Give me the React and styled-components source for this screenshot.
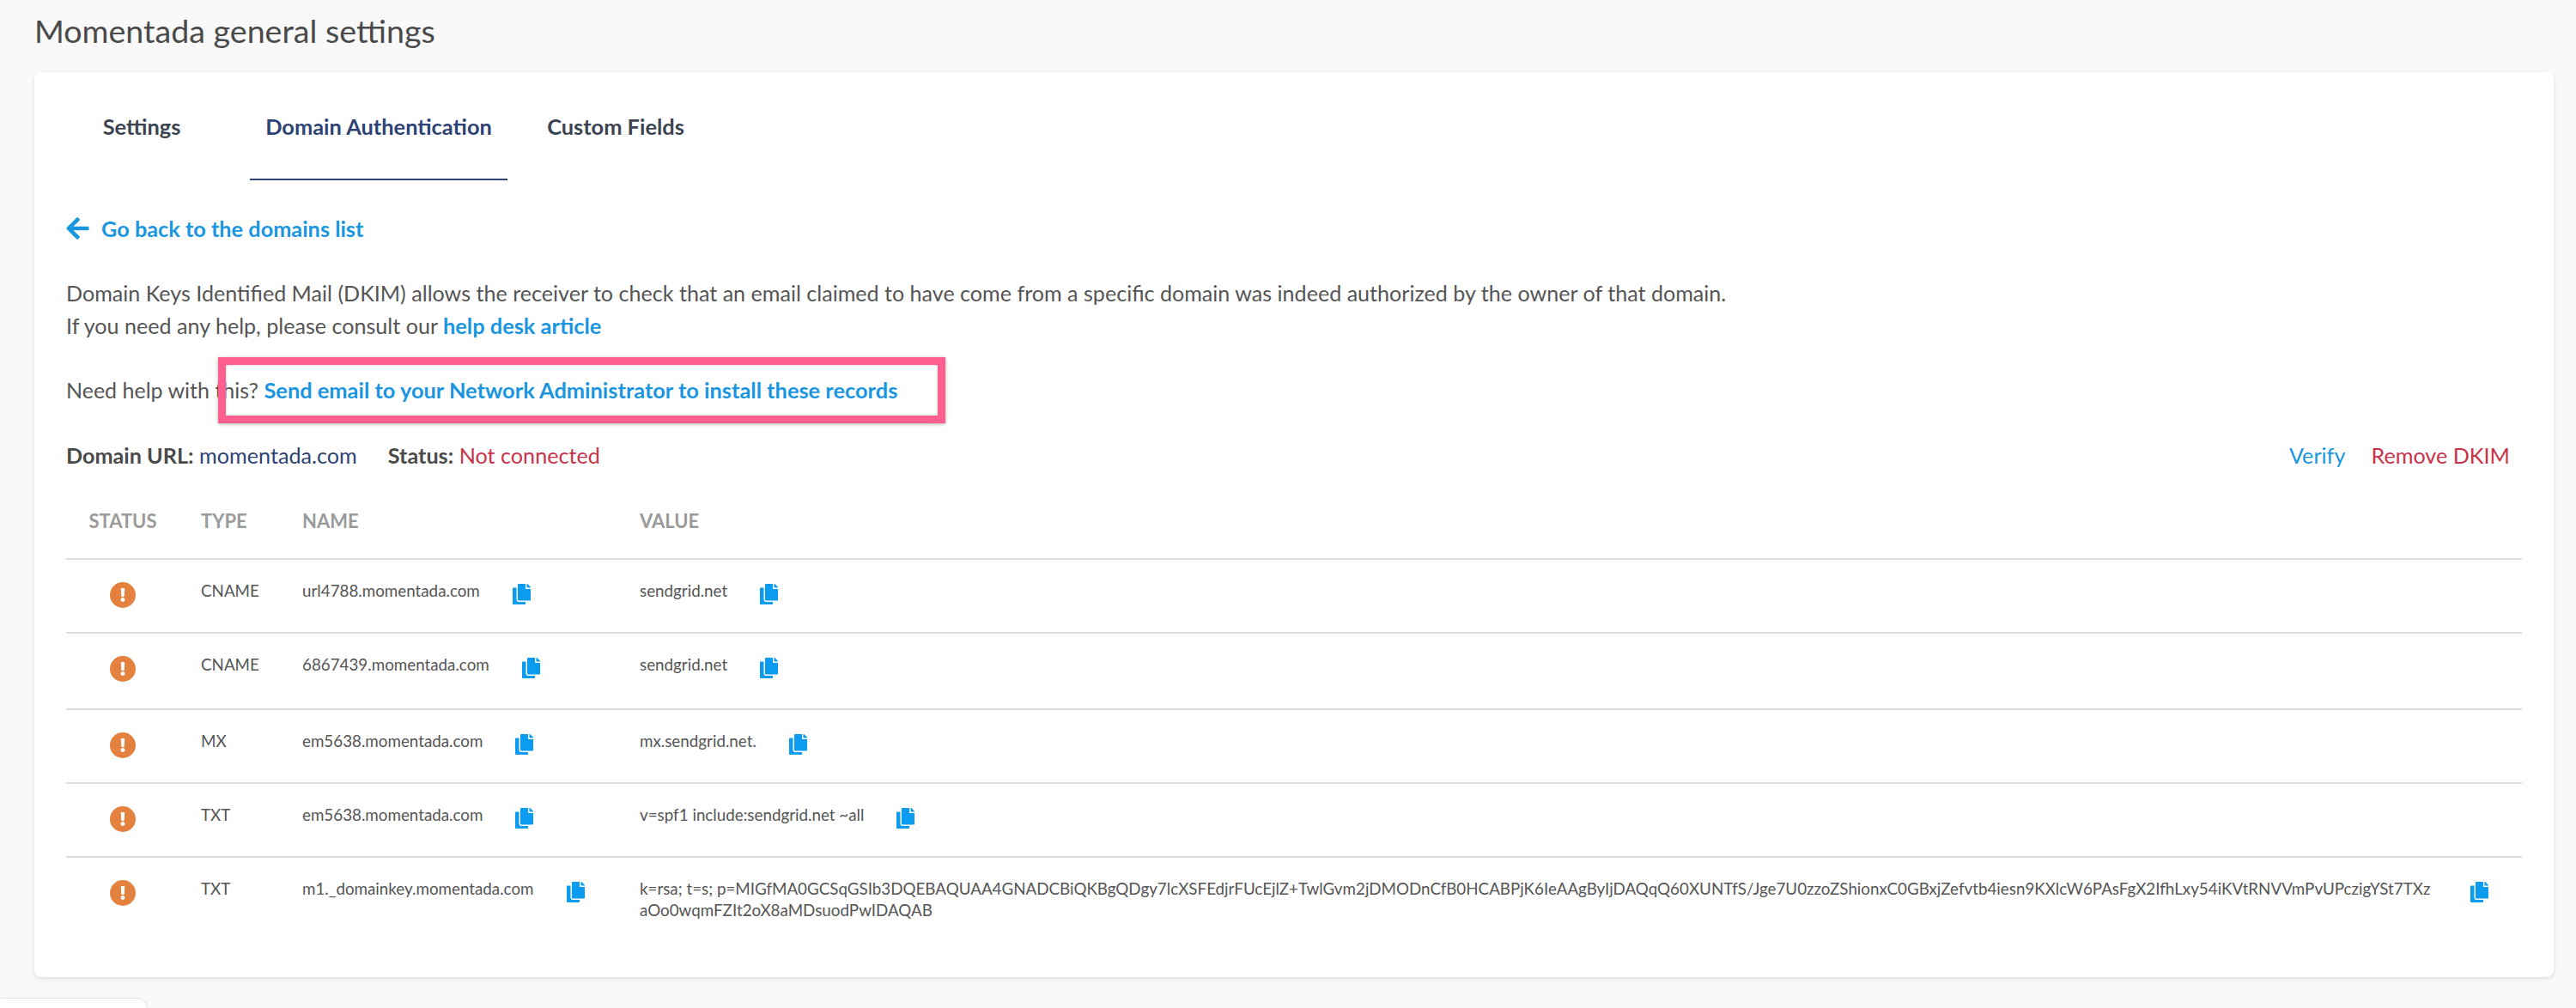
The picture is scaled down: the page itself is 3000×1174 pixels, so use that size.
import React from 'react';
import styled, { createGlobalStyle } from 'styled-components';
import { FaCopy, FaArrowLeft, FaExclamation } from 'react-icons/fa';

const GlobalStyle = createGlobalStyle`
  html, body {
    margin: 0;
    padding: 0;
    background: #f9f9f9;
  }
  body {
    font-family: Lato, "Open Sans", sans-serif;
    color: #555;
  }
`;

const records = [
  { type: 'CNAME', name: 'url4788.momentada.com', value: 'sendgrid.net', height: 86 },
  { type: 'CNAME', name: '6867439.momentada.com', value: 'sendgrid.net', height: 89 },
  { type: 'MX', name: 'em5638.momentada.com', value: 'mx.sendgrid.net.', height: 86 },
  { type: 'TXT', name: 'em5638.momentada.com', value: 'v=spf1 include:sendgrid.net ~all', height: 86 },
  {
    type: 'TXT',
    name: 'm1._domainkey.momentada.com',
    value:
      'k=rsa; t=s; p=MIGfMA0GCSqGSIb3DQEBAQUAA4GNADCBiQKBgQDgy7lcXSFEdjrFUcEjlZ+TwlGvm2jDMODnCfB0HCABPjK6IeAAgByIjDAQqQ60XUNTfS/Jge7U0zzoZShionxC0GBxjZefvtb4iesn9KXlcW6PAsFgX2IfhLxy54iKVtRNVVmPvUPczigYSt7TXzaOo0wqmFZIt2oX8aMDsuodPwIDAQAB',
  },
];

const App = () => {
  return (
    <Page>
      <GlobalStyle />
      <Title>Momentada general settings</Title>
      <Card>
        <Tabs>
          <Tab $left={61} $width={128}>Settings</Tab>
          <Tab $active $left={62} $width={300}>Domain Authentication</Tab>
          <Tab $left={28} $width={196}>Custom Fields</Tab>
        </Tabs>

        <Body>
          <BackLink>
            <FaArrowLeft />
            Go back to the domains list
          </BackLink>

          <Intro>
            Domain Keys Identified Mail (DKIM) allows the receiver to check that an email claimed to have come from a specific domain was indeed authorized by the owner of that domain.
            <br />
            If you need any help, please consult our <Strong>help desk article</Strong>
          </Intro>

          <HelpLine>
            Need help with this? <Strong>Send email to your Network Administrator to install these records</Strong>
            <Highlight />
          </HelpLine>

          <DomainBar>
            <DomainInfo>
              <span>
                <Label>Domain URL:</Label> <Navy>momentada.com</Navy>
              </span>
              <span>
                <Label>Status:</Label> <Red>Not connected</Red>
              </span>
            </DomainInfo>
            <Actions>
              <Blue>Verify</Blue>
              <Red>Remove DKIM</Red>
            </Actions>
          </DomainBar>

          <HeadRow>
            <StatusCell>STATUS</StatusCell>
            <div>TYPE</div>
            <div>NAME</div>
            <div>VALUE</div>
          </HeadRow>

          {records.map((r, i) => (
            <Row key={i} $height={r.height}>
              <StatusCell>
                <Warning>
                  <FaExclamation />
                </Warning>
              </StatusCell>
              <div>{r.type}</div>
              <CopyCell>
                <span>{r.name}</span>
                <CopyIcon />
              </CopyCell>
              <CopyCell>
                <ValueText>{r.value}</ValueText>
                <CopyIcon />
              </CopyCell>
            </Row>
          ))}
        </Body>
      </Card>
      <BottomTab />
    </Page>
  );
};

const Page = styled.div`
  position: relative;
  box-sizing: border-box;
  height: 1174px;
  padding: 0 26px 0 40px;
  overflow: hidden;
`;

const Title = styled.h1`
  margin: 0;
  height: 84px;
  padding-top: 13px;
  box-sizing: border-box;
  font-size: 37.6px;
  line-height: 46px;
  font-weight: 400;
  color: #4a4a4a;
`;

const Card = styled.div`
  box-sizing: border-box;
  height: 1054px;
  background: #fff;
  border-radius: 8px;
  box-shadow: 0 2px 5px rgba(0, 0, 0, 0.12);
`;

const Tabs = styled.div`
  display: flex;
  height: 126px;
`;

const Tab = styled.div`
  box-sizing: border-box;
  width: ${p => p.$width}px;
  margin-left: ${p => p.$left}px;
  height: 126px;
  padding-top: 43px;
  text-align: center;
  font-size: 25.4px;
  line-height: 40px;
  font-weight: 700;
  color: ${p => (p.$active ? '#2e4374' : '#3c4452')};
  border-bottom: ${p => (p.$active ? '2px solid #2e4374' : 'none')};
`;

const Body = styled.div`
  padding: 0 37px;
`;

const BackLink = styled.div`
  display: flex;
  align-items: center;
  gap: 14px;
  margin-top: 36px;
  height: 40px;
  font-size: 25.3px;
  font-weight: 700;
  color: #1a96e0;
  svg {
    width: 27px;
    height: 30px;
  }
`;

const Intro = styled.p`
  margin: 37px 0 0;
  font-size: 25.1px;
  line-height: 37.5px;
`;

const Strong = styled.b`
  font-size: 25.4px;
  color: #1a96e0;
`;

const HelpLine = styled.div`
  position: relative;
  margin-top: 37px;
  font-size: 25px;
  line-height: 38px;
`;

const Highlight = styled.div`
  position: absolute;
  left: 177px;
  top: -19px;
  width: 847px;
  height: 77px;
  box-sizing: border-box;
  border: 9px solid #ff5f8f;
  box-shadow: 0 1px 4px rgba(0, 0, 0, 0.3), inset 0 0 3px rgba(0, 0, 0, 0.25);
`;

const DomainBar = styled.div`
  display: flex;
  justify-content: space-between;
  margin-top: 38px;
  padding-right: 14px;
  font-size: 25.2px;
  line-height: 38px;
`;

const DomainInfo = styled.div`
  display: flex;
  gap: 36px;
`;

const Label = styled.b`
  color: #4a4a4a;
`;

const Actions = styled.div`
  display: flex;
  gap: 30px;
`;

const Navy = styled.span`
  color: #2e4374;
`;

const Red = styled.span`
  color: #c8334a;
`;

const Blue = styled.span`
  color: #1a96e0;
`;

const gridColumns = '157px 118px 393px 1fr';

const HeadRow = styled.div`
  display: grid;
  grid-template-columns: ${gridColumns};
  box-sizing: border-box;
  height: 103px;
  padding-top: 45px;
  font-size: 22px;
  line-height: 26px;
  font-weight: 700;
  color: #9a9a9a;
  border-bottom: 2px solid #dcdcdc;
`;

const Row = styled.div`
  display: grid;
  grid-template-columns: ${gridColumns};
  box-sizing: border-box;
  min-height: ${p => p.$height || 0}px;
  padding-top: 23px;
  font-size: 18.8px;
  line-height: 25px;
  color: #555;
  border-bottom: 2px solid #dcdcdc;
  &:last-child {
    border-bottom: none;
  }
`;

const StatusCell = styled.div`
  box-sizing: border-box;
  width: 132px;
  padding: 0 25px;
  text-align: center;
`;

const Warning = styled.div`
  display: inline-flex;
  align-items: center;
  justify-content: center;
  width: 30px;
  height: 30px;
  margin-top: 3px;
  border-radius: 50%;
  background: #e5813e;
  color: #fff;
  svg {
    width: 16px;
    height: 16px;
  }
`;

const CopyCell = styled.div`
  display: flex;
  align-items: flex-start;
  gap: 38px;
`;

const ValueText = styled.span`
  max-width: 2094px;
  word-break: break-all;
`;

const CopyIcon = styled(FaCopy)`
  flex: none;
  width: 21px;
  height: 24px;
  margin-top: 5px;
  color: #0b9bef;
`;

const BottomTab = styled.div`
  position: absolute;
  left: -10px;
  top: 1162px;
  width: 180px;
  height: 32px;
  background: #fff;
  border: 1px solid #e0e0e0;
  border-radius: 12px;
`;

export default App;
